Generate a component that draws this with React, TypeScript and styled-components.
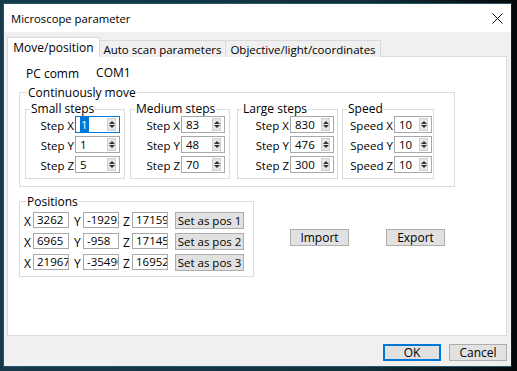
import React from "react";
import styled, { createGlobalStyle } from "styled-components";

const GlobalStyle = createGlobalStyle`
  html, body { margin: 0; padding: 0; }
  body {
    width: 517px;
    height: 371px;
    overflow: hidden;
    background: linear-gradient(90deg, #163a4a 0%, #11303d 70%, #05080a 100%);
    font-family: "Open Sans", "Noto Sans", sans-serif;
    font-size: 11.5px;
    color: #000;
  }
  #root { padding: 3px 0 0 3px; }
  * { box-sizing: border-box; }
`;

const Window = styled.div`
  width: 509px;
  height: 364px;
  background: #f0f0f0;
  border: 1px solid #24566a;
  border-right-color: #1a1a1a;
  display: flex;
  flex-direction: column;
`;

const TitleBar = styled.div`
  height: 28px;
  background: #fff;
  display: flex;
  align-items: center;
  padding-left: 7px;
  font-size: 11.3px;
`;

const Close = styled.div`
  margin-left: auto;
  margin-right: 8px;
  display: flex;
`;

const Client = styled.div`
  flex: 1;
  display: flex;
  flex-direction: column;
  padding: 6px 4px 0 3px;
`;

const TabStrip = styled.div`
  display: flex;
  align-items: flex-end;
  height: 19px;
  margin-bottom: -1px;
`;

const Tab = styled.div<{ $active?: boolean; $w: number }>`
  width: ${({ $w }) => $w}px;
  height: ${({ $active }) => ($active ? 20 : 17)}px;
  background: ${({ $active }) => ($active ? "#fff" : "#f0f0f0")};
  border: 1px solid #d9d9d9;
  border-bottom: none;
  margin-left: ${({ $active }) => ($active ? 0 : -1)}px;
  display: flex;
  align-items: center;
  justify-content: center;
  font-size: ${({ $active }) => ($active ? 12 : 11.5)}px;
  position: relative;
  z-index: ${({ $active }) => ($active ? 1 : 0)};
  white-space: nowrap;
`;

const Panel = styled.div`
  height: 280px;
  background: #fff;
  border: 1px solid #d9d9d9;
  padding: 9px 0 0 11px;
  display: flex;
  flex-direction: column;
`;

const CommRow = styled.div`
  display: flex;
  align-items: center;
  height: 15px;
  margin-bottom: 4px;
  padding-left: 7px;
  font-size: 12px;
`;

const CommValue = styled.span`
  margin-left: 17px;
  margin-top: -3px;
`;

const Group = styled.fieldset<{ $w?: number }>`
  margin: 0;
  min-width: 0;
  width: ${({ $w }) => ($w ? `${$w}px` : "auto")};
  border: 1px solid #dcdcdc;
  padding: 0 5px 7px 5px;
`;

const Legend = styled.legend`
  padding: 0 1px;
  margin-left: 2px;
  font-size: 12px;
  line-height: 15px;
`;

const StepsRow = styled.div`
  display: flex;
  align-items: flex-start;
  margin-top: 2px;
`;

const StepGroup = styled.fieldset<{ $w: number; $ml: number; $pr: number }>`
  margin: 0 0 0 ${({ $ml }) => $ml}px;
  min-width: 0;
  width: ${({ $w }) => $w}px;
  border: 1px solid #dcdcdc;
  padding: 0 ${({ $pr }) => $pr}px 5px 0;
  display: flex;
  flex-direction: column;
  gap: 3px;
`;

const StepLegend = styled.legend`
  padding: 0 1px;
  margin-left: 4px;
  font-size: 12px;
  line-height: 14px;
`;

const StepRow = styled.div`
  display: flex;
  justify-content: flex-end;
  align-items: center;
  height: 17px;
`;

const StepLabel = styled.span`
  margin-right: 1px;
  margin-top: 2px;
  white-space: nowrap;
`;

const SpinBox = styled.div<{ $w: number; $focus?: boolean }>`
  width: ${({ $w }) => $w}px;
  height: 17px;
  border: 1px solid ${({ $focus }) => ($focus ? "#0078d7" : "#a8a8a8")};
  display: flex;
  align-items: center;
  flex-shrink: 0;
`;

const SpinText = styled.div`
  flex: 1;
  padding-left: 4px;
  line-height: 15px;
  overflow: hidden;
`;

const Selected = styled.span`
  background: #0078d7;
  color: #fff;
  padding: 0 1px;
`;

const Spinner = styled.div`
  width: 9px;
  height: 13px;
  margin-right: 3px;
  background: #e6e6e6;
  border: 1px solid #cfcfcf;
  display: flex;
  flex-direction: column;
  align-items: center;
  justify-content: space-evenly;
`;

const Arrow = styled.div<{ $up?: boolean }>`
  width: 0;
  height: 0;
  border-left: 3px solid transparent;
  border-right: 3px solid transparent;
  ${({ $up }) => ($up ? "border-bottom: 3px solid #333;" : "border-top: 3px solid #333;")}
`;

const LowerRow = styled.div`
  display: flex;
  align-items: center;
  margin-top: 7px;
`;

const PosGroup = styled.fieldset`
  margin: 0;
  min-width: 0;
  width: 235px;
  border: 1px solid #dcdcdc;
  padding: 2px 4px 5px 4px;
  display: flex;
  flex-direction: column;
  gap: 3px;
`;

const PosRow = styled.div`
  display: flex;
  align-items: center;
  height: 18px;
`;

const AxisLabel = styled.span<{ $ml?: number }>`
  width: 9px;
  margin-left: ${({ $ml = 0 }) => $ml}px;
  font-size: 12px;
  align-self: flex-end;
  line-height: 14px;
`;

const PosInput = styled.div`
  width: 36px;
  height: 16px;
  border: 1px solid #a8a8a8;
  padding-left: 3px;
  line-height: 14px;
  overflow: hidden;
  white-space: nowrap;
`;

const Button = styled.div<{ $w: number; $default?: boolean }>`
  width: ${({ $w }) => $w}px;
  height: 17px;
  background: #e1e1e1;
  border: 1px solid ${({ $default }) => ($default ? "#0078d7" : "#adadad")};
  box-shadow: ${({ $default }) => ($default ? "inset 0 0 0 1px #0078d7" : "none")};
  display: flex;
  align-items: center;
  justify-content: center;
  font-size: 12px;
  white-space: nowrap;
`;

const SetButton = styled(Button)`
  margin-left: 7px;
  font-size: 11.5px;
`;

const FileButtons = styled.div`
  display: flex;
  gap: 37px;
  margin-left: 36px;
  margin-top: 4px;
`;

const Footer = styled.div`
  display: flex;
  justify-content: flex-end;
  gap: 8px;
  padding-top: 8px;
`;

type Step = { label: string; value: string; focus?: boolean };

const stepGroups: { title: string; w: number; ml: number; pr: number; spin: number; rows: Step[] }[] = [
  {
    title: "Small steps",
    w: 100,
    ml: 0,
    pr: 4,
    spin: 45,
    rows: [
      { label: "Step X", value: "1", focus: true },
      { label: "Step Y", value: "1" },
      { label: "Step Z", value: "5" },
    ],
  },
  {
    title: "Medium steps",
    w: 100,
    ml: 5,
    pr: 4,
    spin: 44,
    rows: [
      { label: "Step X", value: "83" },
      { label: "Step Y", value: "48" },
      { label: "Step Z", value: "70" },
    ],
  },
  {
    title: "Large steps",
    w: 101,
    ml: 7,
    pr: 3,
    spin: 44,
    rows: [
      { label: "Step X", value: "830" },
      { label: "Step Y", value: "476" },
      { label: "Step Z", value: "300" },
    ],
  },
  {
    title: "Speed",
    w: 92,
    ml: 4,
    pr: 1,
    spin: 38,
    rows: [
      { label: "Speed X", value: "10" },
      { label: "Speed Y", value: "10" },
      { label: "Speed Z", value: "10" },
    ],
  },
];

const positions = [
  { x: "3262", y: "-19293", z: "171590" },
  { x: "6965", y: "-958", z: "171450" },
  { x: "219670", y: "-35490", z: "169520" },
];

function Spin({ w, value, focus }: { w: number; value: string; focus?: boolean }) {
  return (
    <SpinBox $w={w} $focus={focus}>
      <SpinText>{focus ? <Selected>{value}</Selected> : value}</SpinText>
      <Spinner>
        <Arrow $up />
        <Arrow />
      </Spinner>
    </SpinBox>
  );
}

export default function App() {
  return (
    <>
      <GlobalStyle />
      <Window>
        <TitleBar>
          Microscope parameter
          <Close>
            <svg width="11" height="11" viewBox="0 0 11 11">
              <path d="M0.5 0.5 L10.5 10.5 M10.5 0.5 L0.5 10.5" stroke="#111" strokeWidth="1" fill="none" />
            </svg>
          </Close>
        </TitleBar>
        <Client>
          <TabStrip>
            <Tab $active $w={93}>Move/position</Tab>
            <Tab $w={127}>Auto scan parameters</Tab>
            <Tab $w={156}>Objective/light/coordinates</Tab>
          </TabStrip>
          <Panel>
            <CommRow>
              PC comm
              <CommValue>COM1</CommValue>
            </CommRow>
            <Group $w={436}>
              <Legend>Continuously move</Legend>
              <StepsRow>
                {stepGroups.map((g) => (
                  <StepGroup key={g.title} $w={g.w} $ml={g.ml} $pr={g.pr}>
                    <StepLegend>{g.title}</StepLegend>
                    {g.rows.map((r) => (
                      <StepRow key={r.label}>
                        <StepLabel>{r.label}</StepLabel>
                        <Spin w={g.spin} value={r.value} focus={r.focus} />
                      </StepRow>
                    ))}
                  </StepGroup>
                ))}
              </StepsRow>
            </Group>
            <LowerRow>
              <PosGroup>
                <Legend>Positions</Legend>
                {positions.map((p, i) => (
                  <PosRow key={i}>
                    <AxisLabel>X</AxisLabel>
                    <PosInput>{p.x}</PosInput>
                    <AxisLabel $ml={5}>Y</AxisLabel>
                    <PosInput>{p.y}</PosInput>
                    <AxisLabel $ml={4}>Z</AxisLabel>
                    <PosInput>{p.z}</PosInput>
                    <SetButton $w={69}>Set as pos {i + 1}</SetButton>
                  </PosRow>
                ))}
              </PosGroup>
              <FileButtons>
                <Button $w={59}>Import</Button>
                <Button $w={59}>Export</Button>
              </FileButtons>
            </LowerRow>
          </Panel>
          <Footer>
            <Button $w={58} $default>OK</Button>
            <Button $w={58}>Cancel</Button>
          </Footer>
        </Client>
      </Window>
    </>
  );
}
